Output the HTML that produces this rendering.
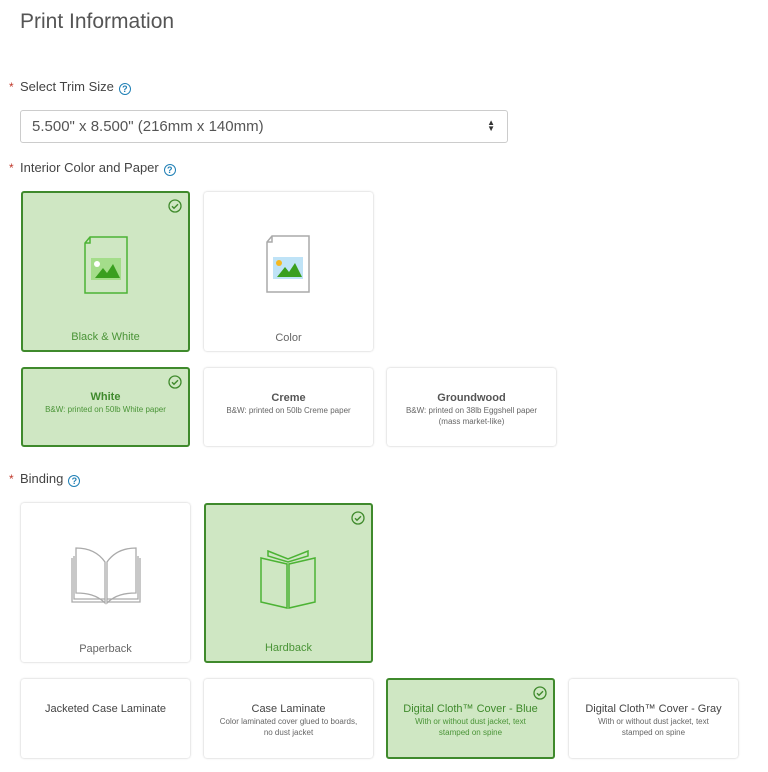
<!DOCTYPE html>
<html><head><meta charset="utf-8"><style>
*{box-sizing:border-box;margin:0;padding:0}
body{width:768px;height:772px;background:#fff;font-family:"Liberation Sans",sans-serif;color:#555;position:relative;overflow:hidden}
.abs{position:absolute}
h1{position:absolute;left:20px;top:10px;font-size:21px;font-weight:normal;color:#555}
.lbl{position:absolute;left:9px;font-size:13px;color:#444}
.lbl .ast{color:#c0392b;font-size:12px;display:inline-block;width:11px}
.q{display:inline-block;width:12px;height:12px;border:1.3px solid #1f7fb5;border-radius:50%;color:#1f7fb5;font-size:9px;line-height:10px;text-align:center;font-weight:bold;margin-left:5px;vertical-align:-1px}
.sel{position:absolute;left:20px;top:110px;width:488px;height:33px;border:1px solid #ccc;border-radius:3px;font-size:15px;color:#555;padding:7px 11px}
.card{position:absolute;width:169px;background:#fff;border-radius:3px;box-shadow:0 0 2px rgba(0,0,0,.25);text-align:center;color:#666}
.card.on{background:#cfe7c3;border:2px solid #3f8a2c;box-shadow:none;color:#4a9437}
.card .cap{position:absolute;left:0;right:0;bottom:7px;font-size:11px}
.card .t{font-size:11px;font-weight:bold;margin-top:24px;color:#555}
.card.on .t{color:#3f8a2c}
.card .d{font-size:8px;line-height:11px;margin-top:1px;color:#666;padding:0 8px}
.card.on .d{color:#4a9437}
.ck{position:absolute;right:6px;top:6px;width:14px;height:14px}
</style></head><body>
<h1>Print Information</h1>
<div class="lbl" style="top:79px"><span class="ast">*</span>Select Trim Size<span class="q">?</span></div>
<div class="sel">5.500" x 8.500" (216mm x 140mm)<span style="position:absolute;right:12px;top:9px;font-size:8px;line-height:6px;color:#333">▲<br>▼</span></div>
<div class="lbl" style="top:160px"><span class="ast">*</span>Interior Color and Paper<span class="q">?</span></div>

<svg width="0" height="0" style="position:absolute"><defs>
<symbol id="ck" viewBox="0 0 14 14"><circle cx="7" cy="7" r="6" fill="none" stroke="#3f8a2c" stroke-width="1.3"/><path d="M4 7.2l2 2 4-4" fill="none" stroke="#3f8a2c" stroke-width="1.4"/></symbol>
</defs></svg>

<div class="card on" style="left:21px;top:191px;height:161px">
<svg class="ck"><use href="#ck"/></svg>
<svg class="abs" style="left:61px;top:43px" width="44" height="58" viewBox="0 0 44 58"><path d="M6 1H43V57H1V7z M1 7H6V1" fill="none" stroke="#4cb334" stroke-width="1.5"/><rect x="7" y="22" width="30" height="22" fill="#a4dd8a"/><circle cx="13" cy="28" r="3" fill="#fff"/><path d="M11 42l8-10 4 5 6-9 7 14z" fill="#3a9f1f"/></svg>
<div class="cap">Black &amp; White</div></div>
<div class="card" style="left:204px;top:192px;height:159px">
<svg class="abs" style="left:62px;top:43px" width="44" height="58" viewBox="0 0 44 58"><path d="M6 1H43V57H1V7z M1 7H6V1" fill="none" stroke="#aaa" stroke-width="1.5"/><rect x="7" y="22" width="30" height="22" fill="#bfe3f7"/><circle cx="13" cy="28" r="3" fill="#f5b820"/><path d="M11 42l8-10 4 5 6-9 7 14z" fill="#3a9f1f"/></svg>
<div class="cap">Color</div></div>

<div class="card on" style="left:21px;top:367px;height:80px"><svg class="ck"><use href="#ck"/></svg><div class="t" style="margin-top:22px">White</div><div class="d">B&amp;W: printed on 50lb White paper</div></div>
<div class="card" style="left:204px;top:368px;height:78px"><div class="t">Creme</div><div class="d">B&amp;W: printed on 50lb Creme paper</div></div>
<div class="card" style="left:387px;top:368px;height:78px"><div class="t">Groundwood</div><div class="d">B&amp;W: printed on 38lb Eggshell paper<br>(mass market-like)</div></div>

<div class="lbl" style="top:471px"><span class="ast">*</span>Binding<span class="q">?</span></div>

<div class="card" style="left:21px;top:503px;height:159px">
<svg class="abs" style="left:48px;top:44px" width="74" height="60" viewBox="0 0 74 60" fill="none" stroke="#aaa" stroke-width="1.3"><path d="M36 56C28 48 18 46 7 46V1c12 0 22 4 29 14z"/><path d="M38 56c8-8 18-10 29-10V1c-12 0-22 4-29 14z"/><path d="M3 11V55h33M71 11V55H38"/><path d="M5 9v43h31M69 9v43H38"/></svg>
<div class="cap">Paperback</div></div>
<div class="card on" style="left:204px;top:503px;height:160px"><svg class="ck"><use href="#ck"/></svg>
<svg class="abs" style="left:53px;top:45px" width="60" height="60" viewBox="0 0 60 60" fill="none" stroke="#4cb334" stroke-width="1.5"><path d="M2 8l26 6v44L2 52z"/><path d="M30 14l26-6v44l-26 6z"/><path d="M9 1l20 8 20-8v5L29 12 9 6z"/></svg>
<div class="cap">Hardback</div></div>

<div class="card" style="left:21px;top:679px;height:79px"><div class="t" style="font-weight:normal;font-size:11px;color:#444">Jacketed Case Laminate</div></div>
<div class="card" style="left:204px;top:679px;height:79px"><div class="t" style="font-weight:normal;color:#444">Case Laminate</div><div class="d">Color laminated cover glued to boards,<br>no dust jacket</div></div>
<div class="card on" style="left:386px;top:678px;height:81px"><svg class="ck"><use href="#ck"/></svg><div class="t" style="font-weight:normal;margin-top:23px">Digital Cloth™ Cover - Blue</div><div class="d">With or without dust jacket, text<br>stamped on spine</div></div>
<div class="card" style="left:569px;top:679px;height:79px"><div class="t" style="font-weight:normal;color:#444">Digital Cloth™ Cover - Gray</div><div class="d">With or without dust jacket, text<br>stamped on spine</div></div>
</body></html>
